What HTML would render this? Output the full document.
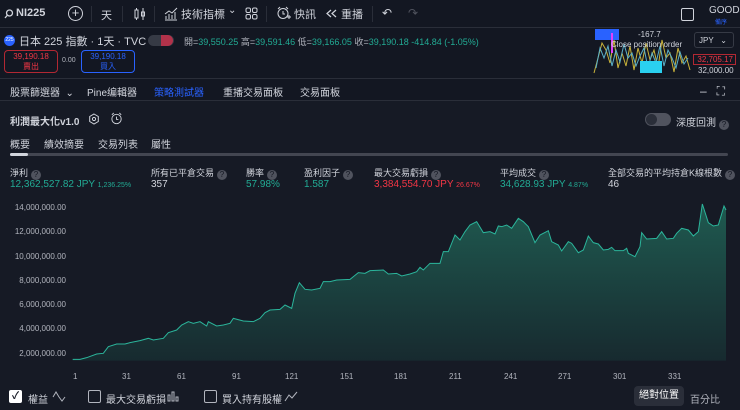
<!DOCTYPE html>
<html><head><meta charset="utf-8"><style>
*{margin:0;padding:0;box-sizing:border-box}
body{width:740px;height:410px;background:#131722;color:#d1d4dc;font-family:"Liberation Sans","Noto Sans CJK TC",sans-serif;font-size:10px;position:relative;overflow:hidden}
.a{position:absolute;white-space:nowrap}
.g{color:#22ab94}.r{color:#f23645}.w{color:#d1d4dc}.m{color:#b2b5be}
.q{display:inline-block;width:10px;height:10px;border-radius:50%;background:#50535e;color:#131722;font-size:8px;text-align:center;line-height:10px;vertical-align:-1px;margin-left:3px}
svg.i{position:absolute}
</style></head><body>
<!-- top bar -->
<div class="a" style="left:0;top:0;width:740px;height:28px;background:#131722;border-bottom:1px solid #2a2e39"></div>
<svg class="i" style="left:4px;top:9px" width="10" height="10" viewBox="0 0 10 10"><circle cx="5.5" cy="4" r="3" fill="none" stroke="#d1d4dc" stroke-width="1.3"/><path d="M3.5 6 L1 9" stroke="#d1d4dc" stroke-width="1.3"/></svg>
<div class="a w" style="left:16px;top:7px;font-size:11px;font-weight:bold">NI225</div>
<div class="a" style="left:68px;top:6px;width:15px;height:15px;border:1.3px solid #d1d4dc;border-radius:50%;text-align:center;line-height:12px;font-size:13px">+</div>
<div class="a" style="left:91px;top:6px;width:1px;height:16px;background:#2a2e39"></div>
<div class="a w" style="left:101px;top:7px;font-size:11px">天</div>
<div class="a" style="left:122px;top:6px;width:1px;height:16px;background:#2a2e39"></div>
<svg class="i" style="left:133px;top:7px" width="14" height="14" viewBox="0 0 14 14"><rect x="2" y="3" width="3" height="8" fill="none" stroke="#d1d4dc"/><path d="M3.5 1v2M3.5 11v2M10 1v12" stroke="#d1d4dc"/><rect x="8.5" y="5" width="3" height="4" fill="none" stroke="#d1d4dc"/></svg>
<div class="a" style="left:154px;top:6px;width:1px;height:16px;background:#2a2e39"></div>
<svg class="i" style="left:164px;top:7px" width="14" height="14" viewBox="0 0 14 14"><path d="M1 13h12M2 12V9M5 12V7M8 12V8M11 12V5M1 7l4-3 3 2 5-5" fill="none" stroke="#d1d4dc"/></svg>
<div class="a w" style="left:181px;top:6px;font-size:11px">技術指標</div>
<div class="a w" style="left:228px;top:5px;font-size:10px">⌄</div>
<svg class="i" style="left:245px;top:7px" width="13" height="13" viewBox="0 0 13 13"><rect x="1" y="1" width="4.5" height="4.5" rx="1.5" fill="none" stroke="#d1d4dc"/><rect x="7.5" y="1" width="4.5" height="4.5" rx="1.5" fill="none" stroke="#d1d4dc"/><rect x="1" y="7.5" width="4.5" height="4.5" rx="1.5" fill="none" stroke="#d1d4dc"/><rect x="7.5" y="7.5" width="4.5" height="4.5" rx="1.5" fill="none" stroke="#d1d4dc"/></svg>
<div class="a" style="left:266px;top:6px;width:1px;height:16px;background:#2a2e39"></div>
<svg class="i" style="left:276px;top:6px" width="15" height="15" viewBox="0 0 15 15"><circle cx="7" cy="7.5" r="5" fill="none" stroke="#d1d4dc"/><path d="M7 5v3h2M2 3l2-2M12 3l-2-2M11 11h4M13 9v4" fill="none" stroke="#d1d4dc"/></svg>
<div class="a w" style="left:294px;top:6px;font-size:11px">快訊</div>
<svg class="i" style="left:326px;top:9px" width="11" height="9" viewBox="0 0 11 9"><path d="M5 1L1 4.5 5 8M10 1L6 4.5 10 8" fill="none" stroke="#d1d4dc" stroke-width="1.2"/></svg>
<div class="a w" style="left:341px;top:6px;font-size:11px">重播</div>
<div class="a" style="left:372px;top:6px;width:1px;height:16px;background:#2a2e39"></div>
<div class="a w" style="left:382px;top:6px;font-size:12px">↶</div>
<div class="a" style="left:408px;top:6px;font-size:12px;color:#50535e">↷</div>
<div class="a" style="left:681px;top:8px;width:13px;height:13px;border:1.3px solid #d1d4dc;border-radius:2px"></div>
<div class="a w" style="left:709px;top:5px;font-size:10px">GOOD</div>
<div class="a" style="left:715px;top:17px;font-size:6px;color:#2962ff">備序</div>
<!-- legend row -->
<div class="a" style="left:4px;top:35px;width:11px;height:11px;border-radius:50%;background:#2962ff;font-size:5px;color:#fff;text-align:center;line-height:11px">225</div>
<div class="a w" style="left:19px;top:33px;font-size:11px">日本 225 指數 · 1天 · TVC</div>
<div class="a" style="left:148px;top:35px;width:26px;height:11px;border-radius:6px;background:#363a45"><span style="display:inline-block;width:12px;height:11px;border-radius:0 6px 6px 0;background:#b2324a;margin-left:13px"></span></div>
<div class="a" style="left:184px;top:35px;font-size:9px;color:#b2b5be">開=<span class="g">39,550.25</span> 高=<span class="g">39,591.46</span> 低=<span class="g">39,166.05</span> 收=<span class="g">39,190.18 -414.84 (-1.05%)</span></div>
<div class="a" style="left:4px;top:50px;width:54px;height:23px;border:1px solid #b22833;border-radius:4px;text-align:center;font-size:8px;color:#f23645;line-height:10px;padding-top:1px">39,190.18<br>賣出</div>
<div class="a m" style="left:62px;top:57px;font-size:7px">0.00</div>
<div class="a" style="left:81px;top:50px;width:54px;height:23px;border:1px solid #2962ff;border-radius:4px;text-align:center;font-size:8px;color:#2962ff;line-height:10px;padding-top:1px">39,190.18<br>買入</div>
<!-- mini chart -->
<svg class="a" style="left:592px;top:28px" width="100" height="50"><polyline fill="none" stroke="#c9b33a" stroke-width="1" points="2,45 6,30 10,15 14,22 18,35 22,12 26,40 30,25 34,38 38,18 42,42 46,20 50,35 54,15 58,32 62,22 66,40 70,12 74,30 78,25 82,44 86,20 90,35 94,28 98,42"/><polyline fill="none" stroke="#5ab0c8" stroke-width="1" points="4,40 8,20 12,30 16,18 20,38 24,22 28,34 32,16 36,30 40,25 44,38 48,28 52,20 56,40 60,25 64,35 68,18 72,38 76,22 80,30 84,40 88,24 92,36 96,30"/><rect x="3" y="1" width="24" height="11" fill="#2962ff"/><rect x="48" y="33" width="22" height="12" fill="#2ad0f0"/><rect x="19" y="5" width="2" height="20" fill="#e040fb"/></svg>
<div class="a" style="left:638px;top:30px;font-size:8px;color:#d1d4dc">-167.7</div>
<div class="a" style="left:611px;top:40px;font-size:8px;color:#d1d4dc">Close position order</div>
<div class="a" style="left:694px;top:32px;width:40px;height:16px;border:1px solid #363a45;border-radius:3px;font-size:8px;color:#d1d4dc;padding:3px 0 0 4px">JPY &nbsp; ⌄</div>
<div class="a" style="left:693px;top:54px;width:43px;height:11px;border:1px solid #b22833;font-size:8px;color:#f23645;text-align:right;padding-right:2px">32,705.17</div>
<div class="a w" style="left:698px;top:66px;font-size:8px">32,000.00</div>
<div class="a" style="left:0;top:78px;width:740px;height:1px;background:#2a2e39"></div>
<!-- tabs row -->
<div class="a w" style="left:10px;top:84px;font-size:10px">股票篩選器 &nbsp;⌄</div>
<div class="a w" style="left:87px;top:84px;font-size:10px">Pine编輯器</div>
<div class="a" style="left:154px;top:84px;font-size:10px;color:#2962ff">策略測試器</div>
<div class="a w" style="left:223px;top:84px;font-size:10px">重播交易面板</div>
<div class="a w" style="left:300px;top:84px;font-size:10px">交易面板</div>
<div class="a w" style="left:700px;top:84px;font-size:12px">–&nbsp;&nbsp; ⛶</div>
<div class="a" style="left:0;top:100px;width:740px;height:310px;background:#161a25;border-top:1px solid #2a2e39"></div>
<div class="a w" style="left:10px;top:113px;font-size:10px;font-weight:bold">利潤最大化v1.0</div>
<svg class="i" style="left:88px;top:113px" width="12" height="12" viewBox="0 0 12 12"><path d="M6 1l4.3 2.5v5L6 11 1.7 8.5v-5z" fill="none" stroke="#d1d4dc"/><circle cx="6" cy="6" r="1.6" fill="none" stroke="#d1d4dc"/></svg>
<svg class="i" style="left:110px;top:112px" width="14" height="14" viewBox="0 0 15 15"><circle cx="7" cy="7.5" r="5" fill="none" stroke="#d1d4dc"/><path d="M7 5v3h2M2 3l2-2M12 3l-2-2" fill="none" stroke="#d1d4dc"/></svg>
<div class="a" style="left:645px;top:113px;width:26px;height:13px;border-radius:7px;background:#50535e"><span style="display:block;width:11px;height:11px;border-radius:50%;background:#2a2e39;margin:1px"></span></div>
<div class="a w" style="left:676px;top:114px;font-size:10px">深度回測<span class="q">?</span></div>
<div class="a w" style="left:10px;top:136px;font-size:10px">概要</div>
<div class="a w" style="left:44px;top:136px;font-size:10px">績效摘要</div>
<div class="a w" style="left:98px;top:136px;font-size:10px">交易列表</div>
<div class="a w" style="left:151px;top:136px;font-size:10px">屬性</div>
<div class="a" style="left:10px;top:153px;width:718px;height:3px;background:#434651;border-radius:2px"></div>
<div class="a" style="left:10px;top:153px;width:18px;height:3px;background:#d1d4dc;border-radius:2px"></div>
<!-- stats -->
<div class="a w" style="left:10px;top:166px;font-size:9px">淨利<span class="q">?</span></div>
<div class="a g" style="left:10px;top:179px;font-size:10px">12,362,527.82 JPY <span style="font-size:7px">1,236.25%</span></div>
<div class="a w" style="left:151px;top:166px;font-size:9px">所有已平倉交易<span class="q">?</span></div>
<div class="a w" style="left:151px;top:179px;font-size:10px">357</div>
<div class="a w" style="left:246px;top:166px;font-size:9px">勝率<span class="q">?</span></div>
<div class="a g" style="left:246px;top:179px;font-size:10px">57.98%</div>
<div class="a w" style="left:304px;top:166px;font-size:9px">盈利因子<span class="q">?</span></div>
<div class="a g" style="left:304px;top:179px;font-size:10px">1.587</div>
<div class="a w" style="left:374px;top:166px;font-size:9px">最大交易虧損<span class="q">?</span></div>
<div class="a r" style="left:374px;top:179px;font-size:10px">3,384,554.70 JPY <span style="font-size:7px">26.67%</span></div>
<div class="a w" style="left:500px;top:166px;font-size:9px">平均成交<span class="q">?</span></div>
<div class="a g" style="left:500px;top:179px;font-size:10px">34,628.93 JPY <span style="font-size:7px">4.87%</span></div>
<div class="a w" style="left:608px;top:166px;font-size:9px">全部交易的平均持倉K線根數<span class="q">?</span></div>
<div class="a w" style="left:608px;top:179px;font-size:10px">46</div>
<!-- y labels -->
<div class="a m" style="left:0;top:196px;width:66px;text-align:right;font-size:8px;line-height:24.3px">14,000,000.00<br>12,000,000.00<br>10,000,000.00<br>8,000,000.00<br>6,000,000.00<br>4,000,000.00<br>2,000,000.00</div>
<svg class="a" style="left:0;top:190px" width="740" height="190" viewBox="0 0 2220 570">
<defs><linearGradient id="gr" x1="0" y1="0" x2="0" y2="1"><stop offset="0" stop-color="#1f5a50"/><stop offset="1" stop-color="#172a2f"/></linearGradient></defs>
<polygon fill="url(#gr)" points="218,508 240,508 260,503 290,492 310,490 325,470 350,462 375,462 390,458 420,452 445,445 460,450 490,445 505,428 530,420 545,405 565,395 580,400 600,395 620,408 625,395 650,408 670,405 690,400 700,385 730,393 760,395 780,385 795,368 810,360 840,358 855,345 875,355 885,310 898,278 915,298 935,300 960,295 970,275 990,275 1010,270 1050,268 1075,248 1095,250 1110,242 1150,240 1165,252 1190,250 1205,258 1230,252 1250,245 1260,232 1270,240 1290,220 1320,220 1330,185 1345,185 1365,135 1380,150 1395,125 1410,105 1430,95 1450,128 1470,125 1485,132 1495,108 1505,110 1520,105 1535,115 1555,85 1570,95 1585,110 1605,158 1620,135 1645,122 1655,155 1675,165 1685,183 1705,155 1715,160 1735,188 1750,180 1765,138 1780,158 1795,162 1810,180 1825,178 1835,172 1845,182 1870,182 1880,175 1885,190 1905,200 1920,170 1925,128 1940,147 1970,145 1985,125 2000,147 2020,145 2030,130 2045,115 2065,120 2080,138 2095,125 2107,42 2125,98 2140,108 2155,105 2172,48 2178,60 2178,512 218,512"/>
<polyline fill="none" stroke="#2bb59b" stroke-width="3" points="218,508 240,508 260,503 290,492 310,490 325,470 350,462 375,462 390,458 420,452 445,445 460,450 490,445 505,428 530,420 545,405 565,395 580,400 600,395 620,408 625,395 650,408 670,405 690,400 700,385 730,393 760,395 780,385 795,368 810,360 840,358 855,345 875,355 885,310 898,278 915,298 935,300 960,295 970,275 990,275 1010,270 1050,268 1075,248 1095,250 1110,242 1150,240 1165,252 1190,250 1205,258 1230,252 1250,245 1260,232 1270,240 1290,220 1320,220 1330,185 1345,185 1365,135 1380,150 1395,125 1410,105 1430,95 1450,128 1470,125 1485,132 1495,108 1505,110 1520,105 1535,115 1555,85 1570,95 1585,110 1605,158 1620,135 1645,122 1655,155 1675,165 1685,183 1705,155 1715,160 1735,188 1750,180 1765,138 1780,158 1795,162 1810,180 1825,178 1835,172 1845,182 1870,182 1880,175 1885,190 1905,200 1920,170 1925,128 1940,147 1970,145 1985,125 2000,147 2020,145 2030,130 2045,115 2065,120 2080,138 2095,125 2107,42 2125,98 2140,108 2155,105 2172,48 2178,60"/>
</svg>
<!-- x labels -->
<div class="a m" style="top:372px;left:0;font-size:8px;width:740px;height:10px">
<span class="a" style="left:73px">1</span><span class="a" style="left:122px">31</span><span class="a" style="left:177px">61</span><span class="a" style="left:232px">91</span><span class="a" style="left:285px">121</span><span class="a" style="left:340px">151</span><span class="a" style="left:394px">181</span><span class="a" style="left:449px">211</span><span class="a" style="left:504px">241</span><span class="a" style="left:558px">271</span><span class="a" style="left:613px">301</span><span class="a" style="left:668px">331</span></div>
<!-- bottom -->
<div class="a" style="left:9px;top:390px;width:13px;height:13px;background:#fff;border-radius:2px;color:#131722;font-size:10px;text-align:center;line-height:13px;font-weight:bold">✓</div>
<div class="a w" style="left:28px;top:391px;font-size:10px">權益</div>
<svg class="i" style="left:52px;top:391px" width="14" height="11" viewBox="0 0 14 11"><path d="M1 6l3-5 3 5M7 6l3 4 3-4" fill="none" stroke="#b2b5be"/></svg>
<div class="a" style="left:88px;top:390px;width:13px;height:13px;border:1.3px solid #b2b5be;border-radius:2px"></div>
<div class="a w" style="left:106px;top:391px;font-size:10px">最大交易虧損</div>
<svg class="i" style="left:167px;top:391px" width="12" height="11" viewBox="0 0 12 11"><rect x="1" y="4" width="2" height="6" fill="none" stroke="#b2b5be"/><rect x="5" y="1" width="2" height="9" fill="none" stroke="#b2b5be"/><rect x="9" y="6" width="2" height="4" fill="none" stroke="#b2b5be"/></svg>
<div class="a" style="left:204px;top:390px;width:13px;height:13px;border:1.3px solid #b2b5be;border-radius:2px"></div>
<div class="a w" style="left:222px;top:391px;font-size:10px">買入持有股權</div>
<svg class="i" style="left:284px;top:391px" width="14" height="11" viewBox="0 0 14 11"><path d="M1 10l4-6 3 3 5-6" fill="none" stroke="#b2b5be"/></svg>
<div class="a" style="left:634px;top:386px;width:50px;height:20px;background:#2a2e39;border-radius:4px;font-size:10px;color:#fff;text-align:center;line-height:20px">絕對位置</div>
<div class="a m" style="left:690px;top:391px;font-size:10px">百分比</div>
</body></html>
